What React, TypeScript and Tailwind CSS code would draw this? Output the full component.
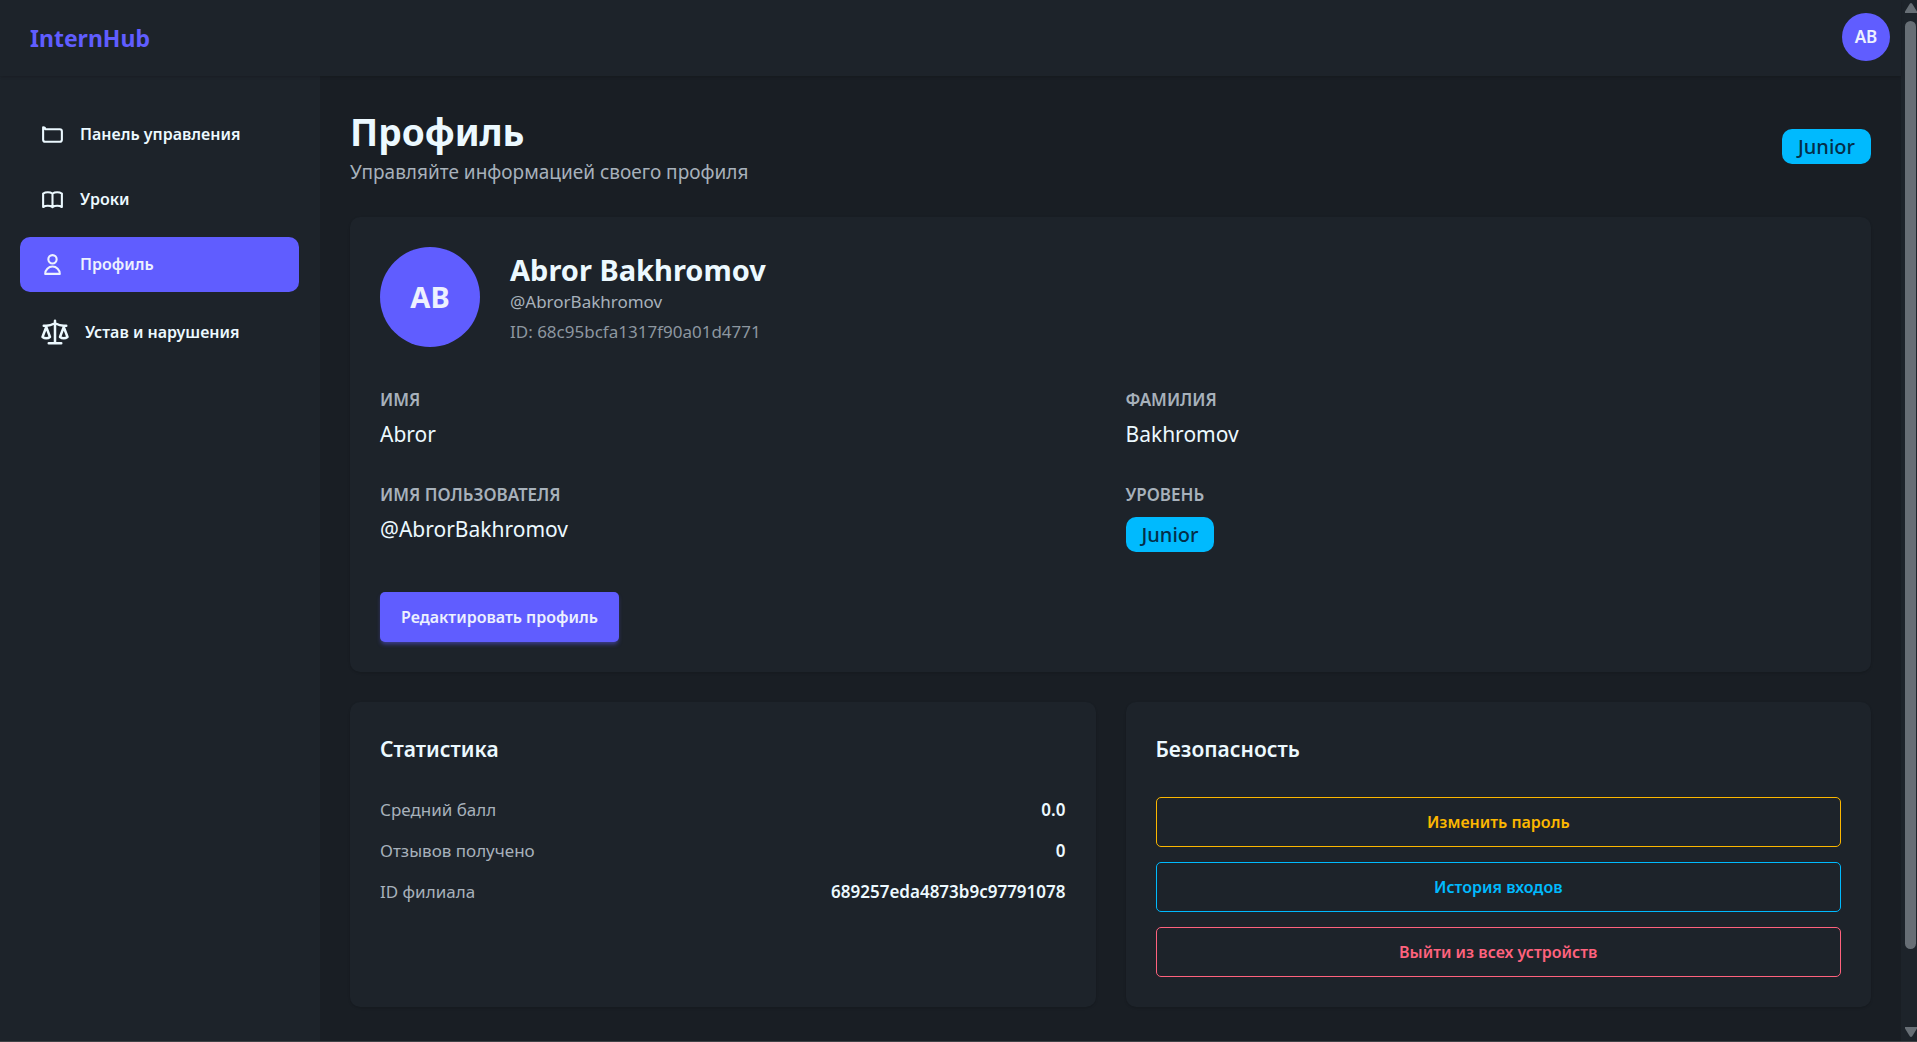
import type { ReactNode } from "react";

function FolderIcon() {
  return (
    <svg className="size-[25px] shrink-0" viewBox="0 0 24 24" fill="none" stroke="currentColor" strokeWidth="2" strokeLinecap="round" strokeLinejoin="round" aria-hidden="true">
      <path d="M3 7v10a2 2 0 002 2h14a2 2 0 002-2V9a2 2 0 00-2-2H5a2 2 0 00-2-2z" />
    </svg>
  );
}

function BookIcon() {
  return (
    <svg className="size-[25px] shrink-0" viewBox="0 0 24 24" fill="none" stroke="currentColor" strokeWidth="2" strokeLinecap="round" strokeLinejoin="round" aria-hidden="true">
      <path d="M12 6.253v13m0-13C10.832 5.477 9.246 5 7.5 5S4.168 5.477 3 6.253v13C4.168 18.477 5.754 18 7.5 18s3.332.477 4.5 1.253m0-13C13.168 5.477 14.754 5 16.5 5c1.747 0 3.332.477 4.5 1.253v13C19.832 18.477 18.247 18 16.5 18c-1.746 0-3.332.477-4.5 1.253" />
    </svg>
  );
}

function UserIcon() {
  return (
    <svg className="size-[25px] shrink-0" viewBox="0 0 24 24" fill="none" stroke="currentColor" strokeWidth="2" strokeLinecap="round" strokeLinejoin="round" aria-hidden="true">
      <path d="M16 7a4 4 0 11-8 0 4 4 0 018 0zM12 14a7 7 0 00-7 7h14a7 7 0 00-7-7z" />
    </svg>
  );
}

function ScaleIcon() {
  return (
    <svg className="size-[30px] shrink-0" viewBox="0 0 24 24" fill="none" stroke="currentColor" strokeWidth="2" strokeLinecap="round" strokeLinejoin="round" aria-hidden="true">
      <path d="m16 16 3-8 3 8c-.87.65-1.920 1-3 1s-2.130-.35-3-1Z" />
      <path d="m2 16 3-8 3 8c-.87.65-1.920 1-3 1s-2.130-.35-3-1Z" />
      <path d="M7 21h10M12 3v18M3 7h2c2 0 5-1 7-2 2 1 5 2 7 2h2" />
    </svg>
  );
}

function NavItem({ icon, label, active = false }: { icon: ReactNode; label: string; active?: boolean }) {
  return (
    <a
      href="#"
      aria-current={active ? "page" : undefined}
      className={
        active
          ? "flex items-center gap-[15px] rounded-[10px] bg-[#605dff] px-5 py-[15px] text-[16px] leading-[25px] font-semibold text-[#edf1fe]"
          : "flex items-center gap-[15px] rounded-[10px] px-5 py-[15px] text-[16px] leading-[25px] font-semibold text-[#ecf9ff]"
      }
    >
      {icon}
      <span>{label}</span>
    </a>
  );
}

function Badge({ children }: { children: ReactNode }) {
  return (
    <span className="inline-flex h-[35px] items-center rounded-[10px] bg-[#00bafe] px-4 text-[20px] font-medium text-[#042e49]">
      {children}
    </span>
  );
}

function Field({ label, children }: { label: string; children: ReactNode }) {
  return (
    <div className="flex min-h-[65px] flex-col items-start gap-1">
      <dt className="text-[17px] leading-[26px] font-semibold text-[#a7b1bb] uppercase">{label}</dt>
      <dd className="text-[21px] leading-[34px] text-[#ecf9ff]">{children}</dd>
    </div>
  );
}

function Stat({ label, value }: { label: string; value: string }) {
  return (
    <div className="flex items-center justify-between leading-[26px]">
      <dt className="text-[17px] text-[#a7b1bb]">{label}</dt>
      <dd className="text-[17px] font-semibold text-[#ecf9ff]">{value}</dd>
    </div>
  );
}

const outline = "h-[50px] w-full rounded-[5px] border text-[16px] font-semibold";

function Scrollbar() {
  return (
    <div aria-hidden="true" className="flex w-4 shrink-0 flex-col items-end gap-2 bg-[#1d232a] pt-[3px] pb-1 text-[#676e75]">
      <svg className="h-[10px] w-3" viewBox="0 0 12 10" fill="currentColor">
        <path d="M6 0Q7 0 8 2L12 8.500V10H0V8.500L4 2Q5 0 6 0Z" />
      </svg>
      <div className="mr-px w-[11px] grow-[15] rounded-full bg-[#676e75]" />
      <div className="grow" />
      <svg className="h-[10px] w-3" viewBox="0 0 12 10" fill="currentColor">
        <path d="M6 10Q7 10 8 8L12 1.500V0H0V1.500L4 8Q5 10 6 10Z" />
      </svg>
    </div>
  );
}

export default function App() {
  return (
    <div className="flex min-h-screen border-b border-[#404347] bg-[#191e24] font-['Noto_Sans',sans-serif] text-[#ecf9ff]">
      <div className="flex min-w-0 flex-1 flex-col">
        <header className="relative flex h-[76px] items-center justify-between bg-[#1d232a] pr-[11px] pl-[30px] shadow-sm">
          <a href="#" className="text-[23px] font-bold text-[#605dff]">InternHub</a>
          <button type="button" className="mb-0.5 size-12 rounded-full bg-[#605dff] text-[17px] font-semibold text-[#edf1fe]">AB</button>
        </header>

        <div className="flex flex-1">
          <aside className="w-80 shrink-0 bg-[#1d232a] pt-[31px] pr-[21px] pl-5">
            <nav className="flex flex-col gap-2.5">
              <NavItem icon={<FolderIcon />} label="Панель управления" />
              <NavItem icon={<BookIcon />} label="Уроки" />
              <NavItem icon={<UserIcon />} label="Профиль" active />
              <NavItem icon={<ScaleIcon />} label="Устав и нарушения" />
            </nav>
          </aside>

          <main className="flex min-w-0 flex-1 flex-col gap-[30px] p-[30px]">
            <div className="flex items-center justify-between">
              <div>
                <h1 className="text-[37px] leading-[52px] font-bold">Профиль</h1>
                <p className="text-[19px] leading-[29px] text-[#a7b1bb]">Управляйте информацией своего профиля</p>
              </div>
              <Badge>Junior</Badge>
            </div>

            <section className="rounded-[10px] bg-[#1d232a] p-[30px] shadow-sm">
              <div className="flex items-center gap-[30px]">
                <div className="flex size-[100px] items-center justify-center rounded-full bg-[#605dff] text-[29px] font-bold text-[#edf1fe]">AB</div>
                <div className="pt-[5px]">
                  <h2 className="text-[29px] leading-9 font-bold">Abror Bakhromov</h2>
                  <p className="text-[17px] leading-7 text-[#a7b1bb]">@AbrorBakhromov</p>
                  <p className="text-[17px] leading-[31px] text-[#8d97a0]">ID: 68c95bcfa1317f90a01d4771</p>
                </div>
              </div>
              <dl className="mt-10 grid grid-cols-2 gap-[30px]">
                <Field label="Имя">Abror</Field>
                <Field label="Фамилия">Bakhromov</Field>
                <Field label="Имя пользователя">@AbrorBakhromov</Field>
                <Field label="Уровень">
                  <span className="flex pt-[5px]"><Badge>Junior</Badge></span>
                </Field>
              </dl>
              <button type="button" className="mt-10 h-[50px] rounded-[5px] bg-[#605dff] px-[21px] text-[16px] font-semibold text-[#edf1fe] shadow-[0_3px_4px_-1px_#605dff80]">
                Редактировать профиль
              </button>
            </section>

            <div className="grid grid-cols-2 gap-[30px]">
              <section className="rounded-[10px] bg-[#1d232a] p-[30px] shadow-sm">
                <h3 className="text-[21px] leading-[35px] font-semibold">Статистика</h3>
                <dl className="mt-[30px] flex flex-col gap-[15px]">
                  <Stat label="Средний балл" value="0.0" />
                  <Stat label="Отзывов получено" value="0" />
                  <Stat label="ID филиала" value="689257eda4873b9c97791078" />
                </dl>
              </section>
              <section className="rounded-[10px] bg-[#1d232a] p-[30px] shadow-sm">
                <h3 className="text-[21px] leading-[35px] font-semibold">Безопасность</h3>
                <div className="mt-[30px] flex flex-col gap-[15px]">
                  <button type="button" className={`${outline} border-[#fcb700] text-[#fcb700]`}>Изменить пароль</button>
                  <button type="button" className={`${outline} border-[#00bafe] text-[#00bafe]`}>История входов</button>
                  <button type="button" className={`${outline} border-[#ff627d] text-[#ff627d]`}>Выйти из всех устройств</button>
                </div>
              </section>
            </div>
          </main>
        </div>
      </div>
      <Scrollbar />
    </div>
  );
}
